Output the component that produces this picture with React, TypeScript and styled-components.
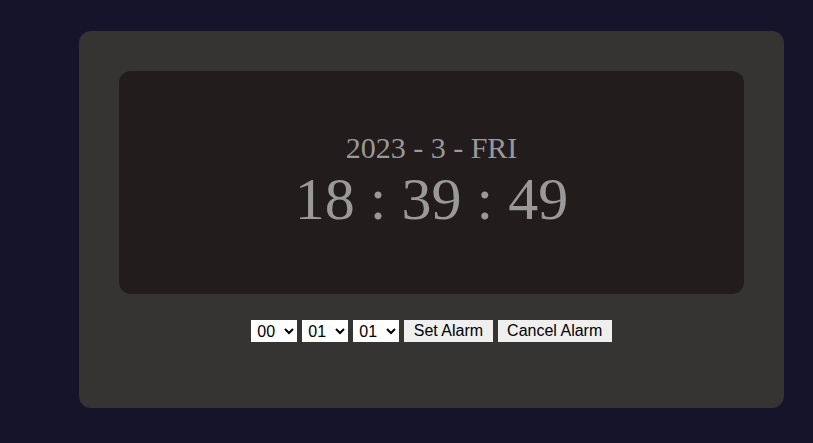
import React, { useState } from "react";
import styled, { createGlobalStyle } from "styled-components";

const GlobalStyle = createGlobalStyle`
  html, body {
    margin: 0;
    padding: 0;
    background: #16142b;
  }
  body {
    font-family: "Liberation Sans", Arial, sans-serif;
  }
`;

const Page = styled.div`
  min-height: 100vh;
  box-sizing: border-box;
  padding: 31px 0 0 79px;
`;

const Card = styled.div`
  width: 705px;
  box-sizing: border-box;
  padding: 40px 40px 40px;
  background: #353433;
  border-radius: 12px;
`;

const Display = styled.div`
  height: 223px;
  background: #221c1c;
  border-radius: 12px;
  display: flex;
  flex-direction: column;
  align-items: center;
  justify-content: center;
  font-family: "Liberation Serif", "Times New Roman", serif;
  color: #999999;
`;

const DateLine = styled.div`
  font-size: 30px;
`;

const TimeLine = styled.div`
  font-size: 60px;
`;

const Controls = styled.div`
  display: flex;
  justify-content: center;
  align-items: center;
  gap: 5px;
  margin: 26px 0;
`;

const Select = styled.select`
  height: 22px;
  width: 46px;
  border: none;
  border-radius: 0;
  background: #fff;
  color: #000;
  font-family: "Liberation Sans", Arial, sans-serif;
  font-size: 16px;
  padding: 0 0 0 2px;
`;

const Button = styled.button`
  height: 22px;
  border: none;
  background: #efefef;
  color: #000;
  font-family: "Liberation Sans", Arial, sans-serif;
  font-size: 16px;
  padding: 0 9.5px;
`;

const pad = (n: number) => String(n).padStart(2, "0");

const hours = Array.from({ length: 24 }, (_, i) => pad(i));
const minutes = Array.from({ length: 60 }, (_, i) => pad(i));

const App = () => {
  const [h, setH] = useState("00");
  const [m, setM] = useState("01");
  const [s, setS] = useState("01");

  return (
    <Page>
      <GlobalStyle />
      <Card>
        <Display>
          <DateLine>2023 - 3 - FRI</DateLine>
          <TimeLine>18 : 39 : 49</TimeLine>
        </Display>
        <Controls>
          <Select value={h} onChange={(e) => setH(e.target.value)}>
            {hours.map((v) => (
              <option key={v}>{v}</option>
            ))}
          </Select>
          <Select value={m} onChange={(e) => setM(e.target.value)}>
            {minutes.map((v) => (
              <option key={v}>{v}</option>
            ))}
          </Select>
          <Select value={s} onChange={(e) => setS(e.target.value)}>
            {minutes.map((v) => (
              <option key={v}>{v}</option>
            ))}
          </Select>
          <Button>Set Alarm</Button>
          <Button>Cancel Alarm</Button>
        </Controls>
      </Card>
    </Page>
  );
};

export default App;
